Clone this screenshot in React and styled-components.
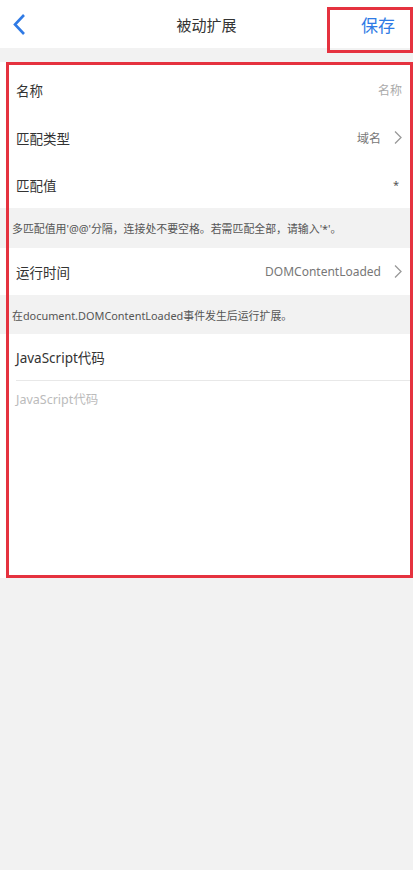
import React from 'react';
import styled, { createGlobalStyle } from 'styled-components';

const blue = '#2f7ae5';
const red = '#e5323f';
const gray = '#f2f2f2';

const GlobalStyle = createGlobalStyle`
  html, body {
    margin: 0;
    padding: 0;
    background: ${gray};
  }
  body {
    font-family: 'Noto Sans', 'Noto Sans CJK SC', sans-serif;
    color: #333;
  }
`;

const Page = styled.div`
  width: 413px;
  min-height: 870px;
  background: ${gray};
`;

const Header = styled.header`
  position: relative;
  height: 48px;
  background: #fff;
  display: flex;
  align-items: center;
  justify-content: space-between;
  padding: 0 18px 0 12px;

  h1 {
    position: absolute;
    left: 0;
    right: 0;
    margin: 0;
    text-align: center;
    font-size: 15px;
    font-weight: 400;
    color: #333;
    pointer-events: none;
  }
`;

const BackButton = styled.button`
  border: 0;
  background: none;
  padding: 0;
  width: 24px;
  height: 30px;
  display: flex;
  align-items: center;
  cursor: pointer;
`;

const SaveButton = styled.button`
  border: 0;
  background: none;
  padding: 0;
  font-size: 17px;
  color: ${blue};
  font-family: inherit;
  cursor: pointer;
`;

// 스크린샷 위의 빨간 표시 박스
const Mark = styled.div`
  position: absolute;
  border: 3px solid ${red};
  pointer-events: none;
  top: ${(p) => p.$top}px;
  left: ${(p) => p.$left}px;
  width: ${(p) => p.$width}px;
  height: ${(p) => p.$height}px;
  box-sizing: border-box;
  z-index: 2;
`;

const Form = styled.section`
  position: relative;
  margin-top: 14px;
`;

const Row = styled.div`
  height: ${(p) => (p.$first ? 52 : 47)}px;
  padding: ${(p) => (p.$first ? '4px' : '0')} 11px 0 16px;
  box-sizing: border-box;
  background: #fff;
  display: flex;
  align-items: center;
  justify-content: space-between;
`;

const Label = styled.span`
  font-size: 13.5px;
  color: #333;
`;

const Value = styled.span`
  display: flex;
  align-items: center;
  gap: 13px;
  font-size: 12px;
  color: ${(p) => (p.$muted ? '#aaa' : '#777')};
`;

const Star = styled.span`
  font-size: 11px;
  color: #555;
  margin-right: 3px;
`;

const Hint = styled.p`
  margin: 0;
  height: ${(p) => p.$height}px;
  padding: 0 12px;
  display: flex;
  align-items: center;
  font-size: 10.9px;
  color: #555;
  background: ${gray};
`;

const CodeBlock = styled.div`
  background: #fff;
  height: 244px;
  display: flex;
  flex-direction: column;
`;

const CodeTitle = styled.div`
  height: 46px;
  margin-left: 16px;
  display: flex;
  align-items: center;
  font-size: 13.5px;
  color: #333;
  border-bottom: 1px solid #e8e8e8;
`;

const CodeInput = styled.textarea`
  flex: 1;
  border: 0;
  resize: none;
  outline: none;
  padding: 8px 16px;
  font-family: inherit;
  font-size: 12.5px;
  color: #333;

  &::placeholder {
    color: #bbb;
  }
`;

const Chevron = () => (
  <svg width="8" height="15" viewBox="0 0 8 15">
    <path d="M1 1.5l6 6-6 6" fill="none" stroke="#999" strokeWidth="1.3" />
  </svg>
);

const App = () => {
  return (
    <Page>
      <GlobalStyle />
      <Header>
        <BackButton>
          <svg width="14" height="23" viewBox="0 0 14 23">
            <path d="M12 2L3 11.5 12 21" fill="none" stroke={blue} strokeWidth="2.6" />
          </svg>
        </BackButton>
        <h1>被动扩展</h1>
        <SaveButton>保存</SaveButton>
        <Mark $top={7} $left={327} $width={86} $height={46} />
      </Header>

      <Form>
        <Mark $top={0} $left={6} $width={407} $height={516} />
        <Row $first>
          <Label>名称</Label>
          <Value $muted>名称</Value>
        </Row>
        <Row>
          <Label>匹配类型</Label>
          <Value>
            域名
            <Chevron />
          </Value>
        </Row>
        <Row>
          <Label>匹配值</Label>
          <Star>*</Star>
        </Row>
        <Hint $height={40}>多匹配值用'@@'分隔，连接处不要空格。若需匹配全部，请输入'*'。</Hint>
        <Row>
          <Label>运行时间</Label>
          <Value>
            DOMContentLoaded
            <Chevron />
          </Value>
        </Row>
        <Hint $height={39}>在document.DOMContentLoaded事件发生后运行扩展。</Hint>
        <CodeBlock>
          <CodeTitle>JavaScript代码</CodeTitle>
          <CodeInput placeholder="JavaScript代码" />
        </CodeBlock>
      </Form>
    </Page>
  );
};

export default App;
